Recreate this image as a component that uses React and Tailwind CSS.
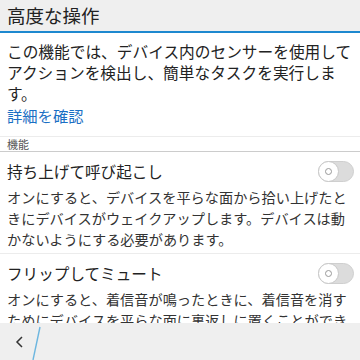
const font = { fontFamily: '"Noto Sans CJK JP", "Noto Sans", sans-serif' }

function Toggle() {
  return (
    <div className="relative h-[21px] w-[36px] rounded-full border border-[#cfcfcf] bg-[#dcdcdc]">
      <div className="absolute left-[-1px] top-[-1px] flex h-[21px] w-[21px] items-center justify-center rounded-full border border-[#c8c8c8] bg-white">
        <div className="h-[7px] w-[7px] rounded-full border border-[#999]" />
      </div>
    </div>
  )
}

function Feature({ title, desc }) {
  return (
    <div className="border-b border-[#ececec] px-[7px] pb-[3px] pt-[8px]">
      <div className="flex items-center justify-between">
        <span className="text-[15.6px] leading-[22px] text-[#222]">{title}</span>
        <div className="mr-[-1px]">
          <Toggle />
        </div>
      </div>
      <p className="mt-[5px] text-[14.2px] leading-[21px] text-[#333]">{desc}</p>
    </div>
  )
}

export default function App() {
  return (
    <div className="flex h-[360px] w-[360px] flex-col overflow-hidden bg-white" style={font}>
      {/* Title bar */}
      <div className="flex h-[33px] shrink-0 items-center border-b-2 border-[#1d88cf] bg-[#efefef] px-[7px]">
        <h1 className="text-[18.5px] leading-none text-[#222]">高度な操作</h1>
      </div>

      <div className="flex-1 overflow-hidden">
        <div className="px-[7px] pt-[8px] pb-[10px]">
          <p className="text-[15.7px] leading-[21px] text-[#222]">
            この機能では、デバイス内のセンサーを使用してアクションを検出し、簡単なタスクを実行します。
          </p>
          <div className="mt-[1px] text-[15.3px] leading-[21px] text-[#1a6fc4]">詳細を確認</div>
        </div>

        <div className="border-t border-b border-t-[#ececec] border-b-[#cccccc] px-[7px] pt-[1px] text-[11px] leading-[13px] text-[#555]">
          機能
        </div>

        <Feature
          title="持ち上げて呼び起こし"
          desc="オンにすると、デバイスを平らな面から拾い上げたときにデバイスがウェイクアップします。デバイスは動かないようにする必要があります。"
        />
        <Feature
          title="フリップしてミュート"
          desc="オンにすると、着信音が鳴ったときに、着信音を消すためにデバイスを平らな面に裏返しに置くことができます。"
        />
      </div>

      {/* Bottom action bar */}
      <div className="relative flex h-[37px] shrink-0 items-center bg-[#efefef] px-[15px]">
        <svg width="10" height="14" viewBox="0 0 10 14" className="mt-[1px]">
          <polyline points="7,2 2,7 7,12" fill="none" stroke="#333" strokeWidth="1.5" />
        </svg>
        <svg width="12" height="37" viewBox="0 0 12 37" className="absolute left-[30px] top-0">
          <line x1="10" y1="4" x2="3" y2="37" stroke="#6cb6e0" strokeWidth="1.4" />
        </svg>
      </div>
    </div>
  )
}
